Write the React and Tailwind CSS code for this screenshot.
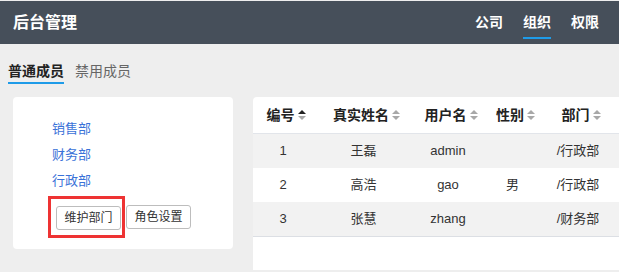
const rows = [
  { id: 1, name: '王磊', user: 'admin', sex: '', dept: '/行政部' },
  { id: 2, name: '高浩', user: 'gao', sex: '男', dept: '/行政部' },
  { id: 3, name: '张慧', user: 'zhang', sex: '', dept: '/财务部' },
];

const cols = [
  { label: '编号', w: 'w-[60px]', active: true },
  { label: '真实姓名', w: 'w-[101px]' },
  { label: '用户名', w: 'w-[68px]' },
  { label: '性别', w: 'w-[61px]' },
  { label: '部门', w: 'w-[70px]' },
];

function SortIcon({ active }) {
  return (
    <svg width="8" height="12" viewBox="0 0 8 12" className="ml-[3px] shrink-0">
      <path d="M0 5 L4 1 L8 5 Z" fill={active ? '#222' : '#a8a8a8'} />
      <path d="M0 7 L4 11 L8 7 Z" fill="#a8a8a8" />
    </svg>
  );
}

export default function App() {
  return (
    <div
      className="w-[619px] h-[272px] overflow-hidden bg-[#eeeeee] pt-px"
      style={{ fontFamily: '"Liberation Sans", "Noto Sans CJK SC", sans-serif' }}
    >
      {/* top bar */}
      <div className="h-[43px] bg-[#464f5a] flex items-center pl-[13px] pr-[20px]">
        <div className="text-white text-[16px] font-bold">后台管理</div>
        <div className="ml-auto flex gap-[20px] h-full">
          {['公司', '组织', '权限'].map((n) => (
            <div key={n} className="relative h-full flex items-center text-white text-[14px] font-bold">
              {n}
              {n === '组织' && <div className="absolute left-0 right-0 bottom-[5px] h-[2px] bg-[#1e9be8]"></div>}
            </div>
          ))}
        </div>
      </div>

      {/* tabs */}
      <div className="mt-[13px] h-[27px] flex items-end pl-[8px] whitespace-nowrap">
        <div className="flex flex-col shrink-0">
          <span className="text-[14px] leading-[20px] font-bold text-[#222]">普通成员</span>
          <div className="mt-[1px] h-[2px] bg-[#1e9be8]"></div>
        </div>
        <div className="ml-[11px] flex flex-col shrink-0">
          <span className="text-[14px] leading-[20px] text-[#666]">禁用成员</span>
          <div className="mt-[1px] h-[2px]"></div>
        </div>
        <input className="ml-[492px] shrink-0 w-[180px] h-[27px] bg-white border border-[#d8dce3] rounded-[4px]" />
      </div>

      <div className="mt-[13px] flex items-start pl-[13px] gap-[20px]">
        {/* departments */}
        <div className="w-[220px] h-[152px] shrink-0 bg-white rounded-[4px] pl-[39px] pt-[19px]">
          {['销售部', '财务部', '行政部'].map((d) => (
            <div key={d} className="text-[13px] leading-[26px] text-[#3a72d8]">{d}</div>
          ))}
          <div className="mt-[11px] flex gap-[5px] pl-[4px]">
            <div className="relative">
              <button className="h-[24px] w-[65px] border border-[#bdbdbd] rounded-[3px] text-[12px] text-[#333] bg-white">维护部门</button>
              <div className="absolute left-[-8px] top-[-9px] w-[77px] h-[42px] border-[3px] border-[#ee3333]"></div>
            </div>
            <button className="h-[24px] w-[65px] border border-[#bdbdbd] rounded-[3px] text-[12px] text-[#333] bg-white">角色设置</button>
          </div>
        </div>

        {/* members table */}
        <div className="flex-1 h-[173px] bg-white rounded-tl-[4px] overflow-hidden">
          <div className="flex h-[37px] border-b border-[#e2e5ea]">
            {cols.map((c) => (
              <div key={c.label} className={`${c.w} shrink-0 flex items-center justify-center text-[14px] font-bold text-[#222] whitespace-nowrap`}>
                <span className="pl-[6px]">{c.label}</span>
                <SortIcon active={c.active} />
              </div>
            ))}
          </div>
          {rows.map((r, i) => (
            <div key={r.id} className={`flex h-[34px] text-[13px] text-[#333] ${i % 2 === 0 ? 'bg-[#f2f2f2]' : 'bg-white'}`}>
              <div className="w-[60px] shrink-0 flex items-center justify-center">{r.id}</div>
              <div className="w-[101px] shrink-0 flex items-center justify-center">{r.name}</div>
              <div className="w-[68px] shrink-0 flex items-center justify-center">{r.user}</div>
              <div className="w-[61px] shrink-0 flex items-center justify-center">{r.sex}</div>
              <div className="w-[70px] shrink-0 flex items-center justify-center">{r.dept}</div>
            </div>
          ))}
          <div className="h-px bg-[#dcdfe4]"></div>
        </div>
      </div>
    </div>
  );
}
